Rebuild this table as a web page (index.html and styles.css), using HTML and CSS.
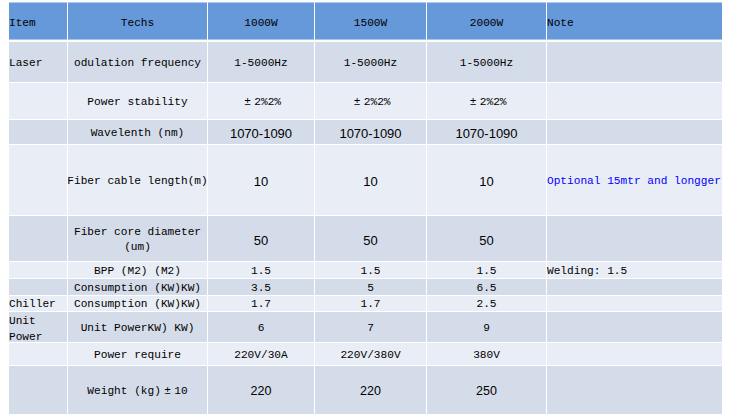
FILE: index.html
```html
<!DOCTYPE html>
<html>
<head>
<meta charset="utf-8">
<link rel="stylesheet" href="styles.css">
</head>
<body>
<div class="sheet">
  <div class="row head">
    <div class="c left">Item</div>
    <div class="c">Techs</div>
    <div class="c">1000W</div>
    <div class="c">1500W</div>
    <div class="c">2000W</div>
    <div class="c left last">Note</div>
  </div>
  <div class="row r1">
    <div class="c left">Laser</div>
    <div class="c">odulation frequency</div>
    <div class="c">1-5000Hz</div>
    <div class="c">1-5000Hz</div>
    <div class="c">1-5000Hz</div>
    <div class="c left last"></div>
  </div>
  <div class="row r2">
    <div class="c left"></div>
    <div class="c">Power stability</div>
    <div class="c"><span class="fw">±</span>2%2%</div>
    <div class="c"><span class="fw">±</span>2%2%</div>
    <div class="c"><span class="fw">±</span>2%2%</div>
    <div class="c left last"></div>
  </div>
  <div class="row r3">
    <div class="c left"></div>
    <div class="c">Wavelenth (nm)</div>
    <div class="c sans">1070-1090</div>
    <div class="c sans">1070-1090</div>
    <div class="c sans">1070-1090</div>
    <div class="c left last"></div>
  </div>
  <div class="row r4">
    <div class="c left"></div>
    <div class="c">Fiber cable length(m)</div>
    <div class="c sans">10</div>
    <div class="c sans">10</div>
    <div class="c sans">10</div>
    <div class="c left last note">Optional 15mtr and longger</div>
  </div>
  <div class="row r5">
    <div class="c left"></div>
    <div class="c">Fiber core diameter<br>(um)</div>
    <div class="c sans">50</div>
    <div class="c sans">50</div>
    <div class="c sans">50</div>
    <div class="c left last"></div>
  </div>
  <div class="row r6">
    <div class="c left"></div>
    <div class="c">BPP (M2) (M2)</div>
    <div class="c">1.5</div>
    <div class="c">1.5</div>
    <div class="c">1.5</div>
    <div class="c left last">Welding: 1.5</div>
  </div>
  <div class="row r7">
    <div class="c left"></div>
    <div class="c">Consumption (KW)KW)</div>
    <div class="c">3.5</div>
    <div class="c">5</div>
    <div class="c">6.5</div>
    <div class="c left last"></div>
  </div>
  <div class="row r8">
    <div class="c left">Chiller</div>
    <div class="c">Consumption (KW)KW)</div>
    <div class="c">1.7</div>
    <div class="c">1.7</div>
    <div class="c">2.5</div>
    <div class="c left last"></div>
  </div>
  <div class="row r9">
    <div class="c left wrap">Unit<br>Power</div>
    <div class="c">Unit PowerKW) KW)</div>
    <div class="c">6</div>
    <div class="c">7</div>
    <div class="c">9</div>
    <div class="c left last"></div>
  </div>
  <div class="row r10">
    <div class="c left"></div>
    <div class="c">Power require</div>
    <div class="c">220V/30A</div>
    <div class="c">220V/380V</div>
    <div class="c">380V</div>
    <div class="c left last"></div>
  </div>
  <div class="row r11">
    <div class="c left"></div>
    <div class="c">Weight (kg)<span class="fw">±</span>10</div>
    <div class="c sans sm">220</div>
    <div class="c sans sm">220</div>
    <div class="c sans sm">250</div>
    <div class="c left last"></div>
  </div>
</div>
</body>
</html>
```

FILE: styles.css
```css
* { box-sizing: border-box; }
html, body { margin: 0; padding: 0; background: #ffffff; }
body {
  font-family: "Liberation Mono", "DejaVu Sans Mono", monospace;
  font-size: 11.15px;
  color: #000;
}
.sheet {
  margin: 2px 0 0 9px;
  width: 713px;
  display: grid;
  grid-template-columns: 59px 140px 107px 112px 120px 175px;
  grid-template-rows: 40px 41px 37px 25px 71px 46px 17px 17px 16px 31px 23px 48px;
}
.row { display: contents; }
.c {
  display: flex;
  align-items: center;
  justify-content: center;
  text-align: center;
  line-height: 15px;
  white-space: nowrap;
  padding-top: 3px;
  border-right: 1px solid #ffffff;
  border-bottom: 1px solid #ffffff;
  background: #d5dce9;
  overflow: visible;
}
.c.left { justify-content: flex-start; text-align: left; }
.c.last { border-right: none; }
.c.wrap { line-height: 16px; padding-top: 4px; }
.row.r2 .c, .row.r4 .c, .row.r6 .c, .row.r8 .c, .row.r10 .c { background: #e9edf5; }
.row.head .c {
  background: #6699da;
  border-top: 1px solid #b3c9ec;
  border-bottom: 2px solid #ffffff;
  box-shadow: inset 0 -1px 0 #aac3ea;
  padding-top: 4px;
}
.row.r6 .c, .row.r7 .c, .row.r8 .c { padding-top: 2px; }
.row.r11 .c { border-bottom: none; }
.sans { font-family: "Liberation Sans", Arial, sans-serif; font-size: 13px; }
.sans.sm { font-size: 12.5px; }
.note { color: #0000ff; }
.fw { display: inline-block; width: 2ch; text-align: center; }
```
